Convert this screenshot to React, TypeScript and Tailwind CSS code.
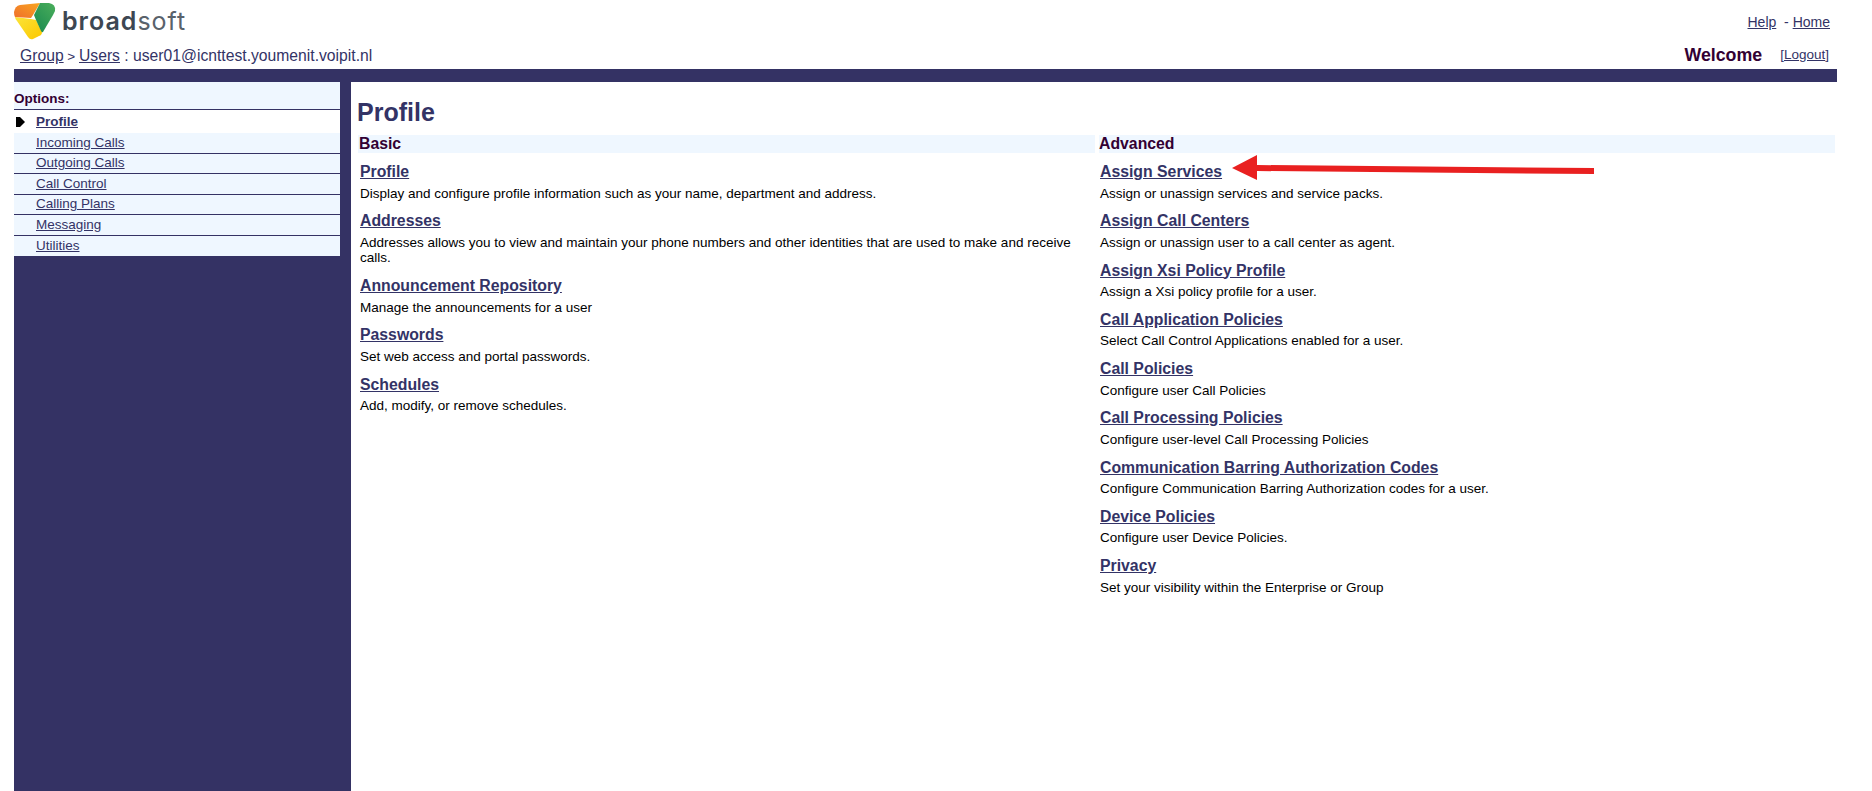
import React from 'react';

const NAV = ['Incoming Calls', 'Outgoing Calls', 'Call Control', 'Calling Plans', 'Messaging', 'Utilities'];

const BASIC = [
  { title: 'Profile', text: 'Display and configure profile information such as your name, department and address.' },
  { title: 'Addresses', text: 'Addresses allows you to view and maintain your phone numbers and other identities that are used to make and receive calls.' },
  { title: 'Announcement Repository', text: 'Manage the announcements for a user' },
  { title: 'Passwords', text: 'Set web access and portal passwords.' },
  { title: 'Schedules', text: 'Add, modify, or remove schedules.' },
];

const ADVANCED = [
  { title: 'Assign Services', text: 'Assign or unassign services and service packs.' },
  { title: 'Assign Call Centers', text: 'Assign or unassign user to a call center as agent.' },
  { title: 'Assign Xsi Policy Profile', text: 'Assign a Xsi policy profile for a user.' },
  { title: 'Call Application Policies', text: 'Select Call Control Applications enabled for a user.' },
  { title: 'Call Policies', text: 'Configure user Call Policies' },
  { title: 'Call Processing Policies', text: 'Configure user-level Call Processing Policies' },
  { title: 'Communication Barring Authorization Codes', text: 'Configure Communication Barring Authorization codes for a user.' },
  { title: 'Device Policies', text: 'Configure user Device Policies.' },
  { title: 'Privacy', text: 'Set your visibility within the Enterprise or Group' },
];

function Logo() {
  return (
    <svg width="42" height="42" viewBox="0 0 42 42" className="shrink-0">
      <defs>
        <linearGradient id="orange" x1="1" y1="0" x2="0" y2="1">
          <stop offset="0" stopColor="#f9a51f" />
          <stop offset="1" stopColor="#ef6f2c" />
        </linearGradient>
        <linearGradient id="yellow" x1="0" y1="0" x2="1" y2="1">
          <stop offset="0" stopColor="#fbe43a" />
          <stop offset="1" stopColor="#fcc800" />
        </linearGradient>
        <linearGradient id="green" x1="0.2" y1="1" x2="1" y2="0">
          <stop offset="0" stopColor="#1c8c50" />
          <stop offset="1" stopColor="#4bae5b" />
        </linearGradient>
      </defs>
      <path d="M1 17 L17 19 L22 20 L28 32 Q28 35 25 36 L19 39 Q16 40 14 37 L3 21 Q1 19 1 17 Z" fill="url(#yellow)" />
      <path d="M0 12 Q1 6 6 5 L26 3 L19 15 L17 18 L1 17 Q0 15 0 12 Z" fill="url(#orange)" />
      <path d="M26 3 L35 3 Q42 4 41 11 Q40 13 39 15 L29 32 Q28 33 27 31 L22 20 L20 15 Z" fill="url(#green)" />
    </svg>
  );
}

function Item({ title, text }: { title: string; text: string }) {
  return (
    <div className="pb-[10.25px] pl-[1px]">
      <a href="#" className="block text-[15.8px] font-bold leading-[20px] text-[#333366] underline">
        {title}
      </a>
      <p className="mt-[3.5px] text-[13.5px] leading-[15.5px] text-black">{text}</p>
    </div>
  );
}

export default function App() {
  return (
    <div className="relative h-[791px] overflow-hidden bg-white font-['Liberation_Sans',Arial,sans-serif]">
      <div className="flex h-[46px] items-start justify-between pl-[14px] pr-[42px]">
        <div className="flex items-center">
          <Logo />
          <span className="ml-[6px] font-['Inter',sans-serif] text-[25px] font-semibold leading-[42px] tracking-[1px] text-[#3d4752]">
            broad<span className="font-normal text-[#59626b]">soft</span>
          </span>
        </div>
        <div className="pt-[14px] text-[14px] leading-[16px] text-[#333366]">
          <a href="#" className="underline">Help</a>
          <span>&nbsp; - </span>
          <a href="#" className="underline">Home</a>
        </div>
      </div>

      <div className="mr-[34px] flex h-[23px] items-start justify-between pl-[20px] pr-[9px]">
        <div className="text-[15.7px] leading-[20px] text-[#333366]">
          <a href="#" className="underline">Group</a>
          <span className="text-[13.5px]"> &gt; </span>
          <a href="#" className="underline">Users</a>
          <span> : user01@icnttest.youmenit.voipit.nl</span>
        </div>
        <div className="-mt-[1px] flex items-center leading-[20px]">
          <span className="text-[17.8px] font-bold text-[#330033]">Welcome</span>
          <span className="ml-[18px] text-[13.5px] text-[#333366]">
            [<a href="#" className="underline">Logout</a>]
          </span>
        </div>
      </div>

      <div className="ml-[14px] mr-[35px] h-[13px] bg-[#343264]" />

      <div className="ml-[14px] flex h-[709px]">
        <aside className="w-[337px] shrink-0 bg-[#343264] pr-[11px]">
          <div className="bg-[#eff7ff]">
            <div className="h-[28px] border-b border-[#343264] pt-[10px] text-[13.5px] font-bold leading-[14px] text-[#330033]">
              Options:
            </div>
            <div className="flex h-[23px] items-center bg-white">
              <svg width="10" height="10" viewBox="0 0 10 10" className="ml-[2px] shrink-0">
                <path d="M0 0 H4 L9 5 L4 10 H0 Z" fill="#000" />
              </svg>
              <a href="#" className="ml-[10px] mt-[1px] text-[13.5px] font-bold text-[#333366] underline">Profile</a>
            </div>
            {NAV.map((label, i) => (
              <div
                key={label}
                className={`flex h-[20.5px] items-center pl-[22px] text-[13.5px] ${i < NAV.length - 1 ? 'border-b border-[#343264]' : ''}`}
              >
                <a href="#" className="text-[#333366] underline">{label}</a>
              </div>
            ))}
          </div>
        </aside>

        <main className="min-w-0 flex-1 rounded-tl-[6px] bg-white pl-[7px]">
          <h1 className="-ml-[1px] pt-[16px] text-[25px] font-bold leading-[29px] text-[#333366]">Profile</h1>
          <div className="mt-[8px] grid grid-cols-[737px_736px] gap-x-[4px]">
            <section>
              <h2 className="h-[18px] bg-[#eff7ff] pl-[1px] text-[15.8px] font-bold leading-[18px] text-[#330033]">Basic</h2>
              <div className="pl-[1px] pt-[9px]">
                {BASIC.map(item => <Item key={item.title} {...item} />)}
              </div>
            </section>
            <section>
              <h2 className="h-[18px] bg-[#eff7ff] text-[15.8px] font-bold leading-[18px] text-[#330033]">Advanced</h2>
              <div className="pt-[9px]">
                {ADVANCED.map(item => <Item key={item.title} {...item} />)}
              </div>
            </section>
          </div>
        </main>
      </div>

      <svg width="380" height="40" viewBox="0 0 380 40" className="absolute left-[1225px] top-[150px]">
        <polygon points="7,18 32,5 32,15 369,18 369,24 32,21 32,30" fill="#e92020" />
      </svg>
    </div>
  );
}
